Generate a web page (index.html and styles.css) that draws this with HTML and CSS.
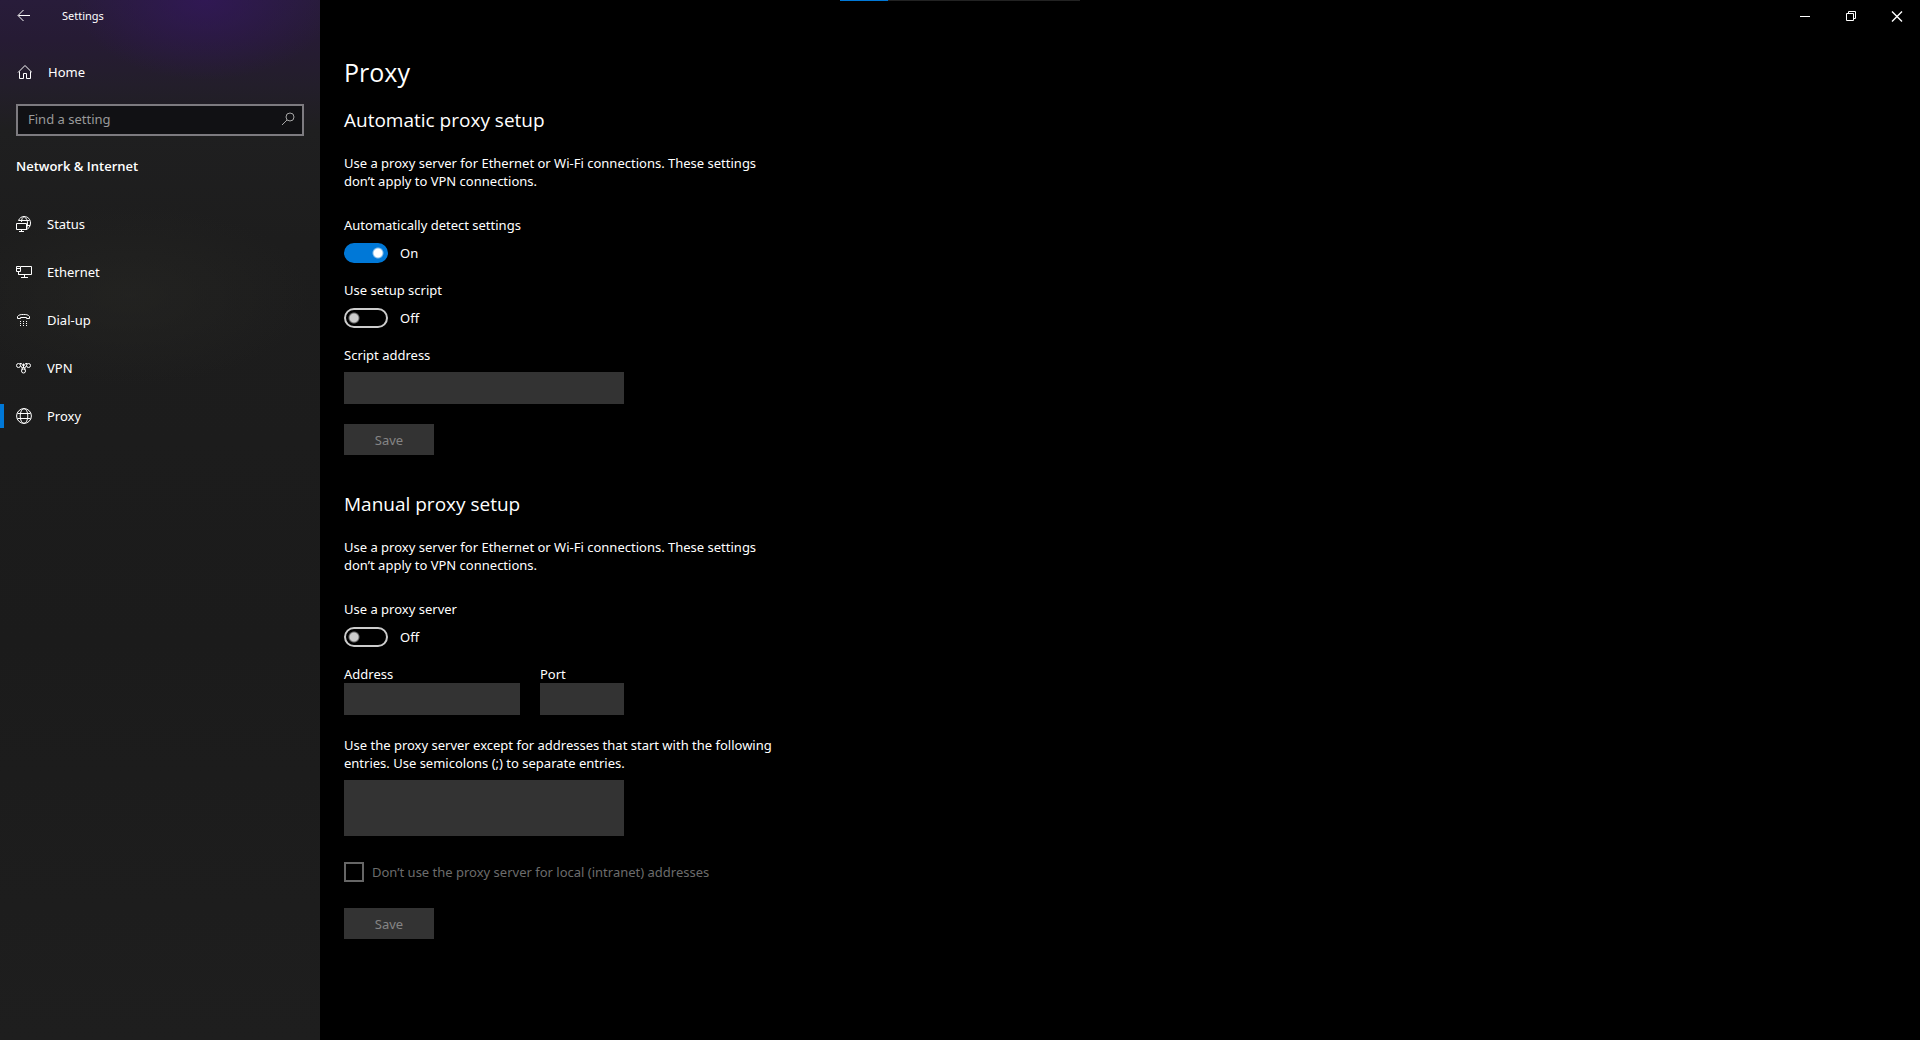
FILE: index.html
```html
<!DOCTYPE html>
<html lang="en">
<head>
<meta charset="utf-8">
<meta name="viewport" content="width=device-width, initial-scale=1">
<title>Settings</title>
<link rel="stylesheet" href="styles.css">
</head>
<body>
<div class="window">
  <progress class="load-bar" value="20" max="100" aria-label="Loading"></progress>

  <aside class="sidebar">
    <div class="title-row">
      <button class="back" type="button" aria-label="Back">
        <svg class="icon" viewBox="0 0 16 16"><path d="M14 7.500H2.500M7.500 2L2 7.500L7.500 13"/></svg>
      </button>
      <span class="app-name">Settings</span>
    </div>

    <a class="home" href="#home">
      <svg class="icon" viewBox="0 0 16 16"><path d="M2 8.500L9 1.500L16 8.500M3.500 7.500V14.500H7.500V9.500H10.500V14.500H14.500V7.500"/></svg>
      Home
    </a>

    <label class="search">
      <input class="search-input" type="search" placeholder="Find a setting" aria-label="Find a setting">
      <svg class="search-icon" viewBox="0 0 16 16"><circle cx="10" cy="6" r="4"/><path d="M7 9L2 14"/></svg>
    </label>

    <h2 class="section-name">Network &amp; Internet</h2>

    <nav class="nav">
      <a class="nav-item" href="#status">
        <svg class="icon" viewBox="0 0 16 16"><path d="M2.500 4.500C3.500 2 5.500 .5 8 .5C12 .5 14.500 3.500 14.500 7C14.500 10.500 12.500 13 10 13.500M8 .5C6.500 1.500 5.500 3 5.500 6M8 .5C10.500 2 11.500 4.500 11.500 7C11.500 10 11 12 10 13.500M2.500 4.500H13.500M10.500 9.500H14"/><path d="M.5 7.500H10.500V13.500H.5ZM5.500 13.500V15.500M3 15.500H8"/></svg>
        Status
      </a>
      <a class="nav-item" href="#ethernet">
        <svg class="icon" viewBox="0 0 16 16"><path d="M5 2.500H15.500V10.500H2.500V7M.5 2.500H4.500V7.500H.5ZM1 4.500H4M2.500 7.500V10.500M8.500 10.500V13.500M5 13.500H12"/></svg>
        Ethernet
      </a>
      <a class="nav-item" href="#dialup">
        <svg class="icon" viewBox="0 0 16 16"><path d="M1.500 6.500V4.500C3 2.500 5 2.500 7.500 2.500C10 2.500 12 2.500 13.500 4.500V6.500H10.500V5.500H4.500V6.500Z"/><path class="dots" d="M4 9h1v1h-1zM7 9h1v1h-1zM10 9h1v1h-1zM4 11h1v1h-1zM7 11h1v1h-1zM10 11h1v1h-1zM4 13h1v1h-1zM7 13h1v1h-1zM10 13h1v1h-1z"/></svg>
        Dial-up
      </a>
      <a class="nav-item" href="#vpn">
        <svg class="icon" viewBox="0 0 16 16"><circle cx="2.500" cy="5.500" r="2"/><circle cx="12.500" cy="5.500" r="2"/><circle cx="7.500" cy="11" r="2"/><path d="M4 3.500H5.500L9.500 9.500M11 3.500H9.500L5.500 9.500M4.500 5.500L6.500 8.500M10.500 5.500L8.500 8.500M7.500 3.500V8"/></svg>
        VPN
      </a>
      <a class="nav-item current" href="#proxy" aria-current="page">
        <svg class="icon" viewBox="0 0 16 16"><circle cx="8" cy="8" r="7.400"/><ellipse cx="8" cy="8" rx="3.800" ry="7.400"/><path d="M1.500 5.500H14.500M1.500 10.500H14.500"/></svg>
        Proxy
      </a>
    </nav>
  </aside>

  <main class="content">
    <div class="controls">
      <button class="control" type="button" aria-label="Minimize"><svg class="glyph" viewBox="0 0 12 12"><path d="M1 6.500H11"/></svg></button>
      <button class="control" type="button" aria-label="Restore"><svg class="glyph" viewBox="0 0 12 12"><path d="M1.500 3.500H8.500V10.500H1.500ZM3.500 3V1.500H10.500V8.500H9"/></svg></button>
      <button class="control" type="button" aria-label="Close"><svg class="glyph bright" viewBox="0 0 12 12"><path d="M1 1.500L11 11.500M11 1.500L1 11.500"/></svg></button>
    </div>

    <div class="page">
      <h1 class="page-title">Proxy</h1>

      <form class="group">
        <h2 class="group-title">Automatic proxy setup</h2>
        <p class="note">Use a proxy server for Ethernet or Wi-Fi connections. These settings don’t apply to VPN connections.</p>
        <div class="setting">
          <label for="detect">Automatically detect settings</label>
          <div class="switch-row"><input class="switch" id="detect" type="checkbox" role="switch" checked><span>On</span></div>
        </div>
        <div class="setting">
          <label for="use-script">Use setup script</label>
          <div class="switch-row"><input class="switch" id="use-script" type="checkbox" role="switch"><span>Off</span></div>
        </div>
        <div class="field">
          <label for="script">Script address</label>
          <input class="box" id="script" type="text" disabled>
        </div>
        <button class="save" type="button" disabled>Save</button>
      </form>

      <form class="group">
        <h2 class="group-title">Manual proxy setup</h2>
        <p class="note">Use a proxy server for Ethernet or Wi-Fi connections. These settings don’t apply to VPN connections.</p>
        <div class="setting">
          <label for="use-proxy">Use a proxy server</label>
          <div class="switch-row"><input class="switch" id="use-proxy" type="checkbox" role="switch"><span>Off</span></div>
        </div>
        <div class="endpoint">
          <div class="endpoint-field">
            <label for="address">Address</label>
            <input class="box" id="address" type="text" disabled>
          </div>
          <div class="endpoint-field">
            <label for="port">Port</label>
            <input class="box" id="port" type="text" disabled>
          </div>
        </div>
        <div class="field exceptions">
          <label for="except">Use the proxy server except for addresses that start with the following entries. Use semicolons (;) to separate entries.</label>
          <textarea class="box tall" id="except" disabled></textarea>
        </div>
        <label class="check-row"><input class="check" type="checkbox" disabled>Don’t use the proxy server for local (intranet) addresses</label>
        <button class="save" type="button" disabled>Save</button>
      </form>
    </div>
  </main>
</div>
</body>
</html>
```
FILE: styles.css
```css
* {
  box-sizing: border-box;
}

body {
  margin: 0;
  background: #000;
  color: #fff;
  font: 13px/18px "Noto Sans", "Open Sans", sans-serif;
}

h1, h2, p {
  margin: 0;
  font-family: "Open Sans", "Noto Sans", sans-serif;
  font-weight: 400;
}

p {
  font-family: inherit;
}

a {
  color: inherit;
  text-decoration: none;
}

button, input, textarea {
  margin: 0;
  padding: 0;
  border: 0;
  border-radius: 0;
  background: none;
  color: inherit;
  font: inherit;
}

label {
  display: block;
}

svg {
  display: block;
  flex: none;
  fill: none;
  stroke: currentColor;
}

.window {
  position: relative;
  display: grid;
  grid-template-columns: 320px 1fr;
  min-height: 100vh;
}

/* thin loading strip over the top edge of the window */
.load-bar {
  position: absolute;
  top: 0;
  left: 50%;
  width: 240px;
  height: 1px;
  margin-left: -120px;
  border: 0;
  appearance: none;
  background: #222;
}

.load-bar::-webkit-progress-bar {
  background: #222;
}

.load-bar::-webkit-progress-value {
  background: #0078d7;
}

/* sidebar */
.sidebar {
  background:
    radial-gradient(ellipse 130px 80px at 205px 0, rgba(50, 23, 90, .8), transparent),
    radial-gradient(ellipse 180px 90px at 130px 295px, rgba(38, 38, 35, .6), transparent),
    linear-gradient(#281c3a 0, #261b34 40px, #231e2b 85px, #1f1f20 130px, #1d1d1d 240px, #1b1b1b 640px, #1e1e1e 100%);
}

.title-row {
  display: flex;
  align-items: center;
  gap: 30px;
  height: 32px;
  padding-left: 16px;
}

.app-name {
  font-size: 11px;
}

.icon {
  width: 16px;
  height: 16px;
}

.home, .nav-item {
  display: flex;
  align-items: center;
  height: 48px;
  padding-left: 16px;
  gap: 15px;
}

.home {
  margin-top: 16px;
  gap: 16px;
}

.search {
  display: flex;
  align-items: center;
  height: 32px;
  margin: 8px 16px 0;
  padding: 0 6px 2px 10px;
  border: 2px solid #7d7b80;
  background: #111114;
}

.search-input {
  flex: 1;
  min-width: 0;
  outline: none;
}

.search-input::placeholder {
  color: #9a9a9a;
  opacity: 1;
}

.search-icon {
  width: 16px;
  height: 16px;
  color: #a6a6a6;
}

.section-name {
  margin: 21px 16px 25px;
  font-size: 13px;
  font-weight: 600;
}

.current {
  background: linear-gradient(#0078d7, #0078d7) 0 50% / 4px 24px no-repeat;
}

.dots {
  fill: currentColor;
  stroke: none;
}

/* window buttons */
.controls {
  display: flex;
  justify-content: flex-end;
  height: 32px;
}

.control {
  display: grid;
  place-items: center;
  width: 46px;
}

.glyph {
  width: 12px;
  height: 12px;
}

.bright {
  stroke-width: 1.4;
}

/* page */
.page {
  max-width: 464px;
  padding: 22px 0 100px 24px;
}

.page-title {
  font-size: 25px;
  line-height: 36px;
}

.group {
  margin-top: 16px;
}

.group + .group {
  margin-top: 35px;
}

.group-title {
  font-size: 19px;
  line-height: 28px;
}

.note {
  margin: 20px 0 26px;
}

.setting {
  margin-bottom: 17px;
}

.switch-row {
  display: flex;
  align-items: center;
  gap: 12px;
  height: 20px;
  margin-top: 9px;
  margin-bottom: 18px;
}

.setting .switch-row {
  margin-bottom: 0;
}

.switch {
  width: 44px;
  height: 20px;
  border: 2px solid #ccc;
  border-radius: 10px;
  appearance: none;
  background: radial-gradient(circle at 8px 8px, #ccc 4px, transparent 6px);
}

.switch:checked {
  border-color: #0078d7;
  background: radial-gradient(circle at 32px 8px, #fff 4px, #0078d7 6px);
}

.setting {
  margin-bottom: 18px;
}

.box {
  display: block;
  width: 100%;
  height: 32px;
  background: #333;
}

.field .box {
  width: 280px;
  margin-top: 8px;
}

.field .tall {
  height: 56px;
  resize: none;
}

.endpoint {
  display: grid;
  grid-template-columns: 176px 84px;
  gap: 20px;
}

.exceptions {
  margin-top: 21px;
}

.check-row {
  display: flex;
  align-items: center;
  gap: 8px;
  margin-top: 26px;
  color: #6c6c6c;
}

.check {
  width: 20px;
  height: 20px;
  border: 2px solid #666;
  appearance: none;
}

.save {
  display: block;
  width: 90px;
  height: 31px;
  margin-top: 20px;
  background: #333;
  color: #858585;
}

.check-row + .save {
  margin-top: 26px;
}
```
